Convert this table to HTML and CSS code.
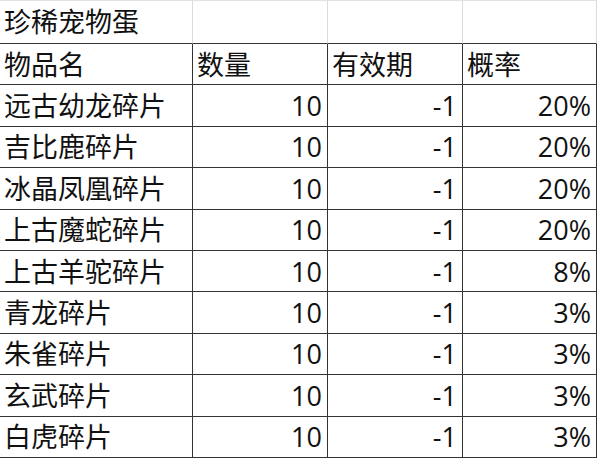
FILE: index.html
```html
<!DOCTYPE html>
<html lang="zh">
<head>
<meta charset="utf-8">
<title>珍稀宠物蛋</title>
<link rel="stylesheet" href="styles.css">
</head>
<body>
<div class="sheet">
  <div class="cell top">珍稀宠物蛋</div>
  <div class="cell top"></div>
  <div class="cell top"></div>
  <div class="cell top"></div>

  <div class="cell">物品名</div>
  <div class="cell">数量</div>
  <div class="cell">有效期</div>
  <div class="cell">概率</div>

  <div class="cell">远古幼龙碎片</div>
  <div class="cell num">10</div>
  <div class="cell num">-1</div>
  <div class="cell num">20%</div>

  <div class="cell">吉比鹿碎片</div>
  <div class="cell num">10</div>
  <div class="cell num">-1</div>
  <div class="cell num">20%</div>

  <div class="cell">冰晶凤凰碎片</div>
  <div class="cell num">10</div>
  <div class="cell num">-1</div>
  <div class="cell num">20%</div>

  <div class="cell">上古魔蛇碎片</div>
  <div class="cell num">10</div>
  <div class="cell num">-1</div>
  <div class="cell num">20%</div>

  <div class="cell">上古羊驼碎片</div>
  <div class="cell num">10</div>
  <div class="cell num">-1</div>
  <div class="cell num">8%</div>

  <div class="cell">青龙碎片</div>
  <div class="cell num">10</div>
  <div class="cell num">-1</div>
  <div class="cell num">3%</div>

  <div class="cell">朱雀碎片</div>
  <div class="cell num">10</div>
  <div class="cell num">-1</div>
  <div class="cell num">3%</div>

  <div class="cell">玄武碎片</div>
  <div class="cell num">10</div>
  <div class="cell num">-1</div>
  <div class="cell num">3%</div>

  <div class="cell">白虎碎片</div>
  <div class="cell num">10</div>
  <div class="cell num">-1</div>
  <div class="cell num">3%</div>
</div>
</body>
</html>
```

FILE: styles.css
```css
html, body {
  margin: 0;
  padding: 0;
  background: #ffffff;
}

.sheet {
  display: grid;
  grid-template-columns: 193px 135px 135px 134px;
  grid-template-rows: 44px;
  grid-auto-rows: 41.4px;
  font-family: "Open Sans", "Noto Sans CJK SC", sans-serif;
  font-size: 27px;
  color: #111111;
  width: 597px;
}

.cell {
  display: flex;
  align-items: center;
  padding: 0 4px 0 4px;
  border-right: 1px solid #333333;
  border-bottom: 1px solid #333333;
  white-space: nowrap;
  overflow: hidden;
  line-height: 1;
}

.cell.top {
  border-top: 1px solid #e3e3e3;
  border-right-color: #dcdcdc;
  padding-bottom: 2px;
}

.cell.num {
  justify-content: flex-end;
  padding-right: 5px;
}
```
